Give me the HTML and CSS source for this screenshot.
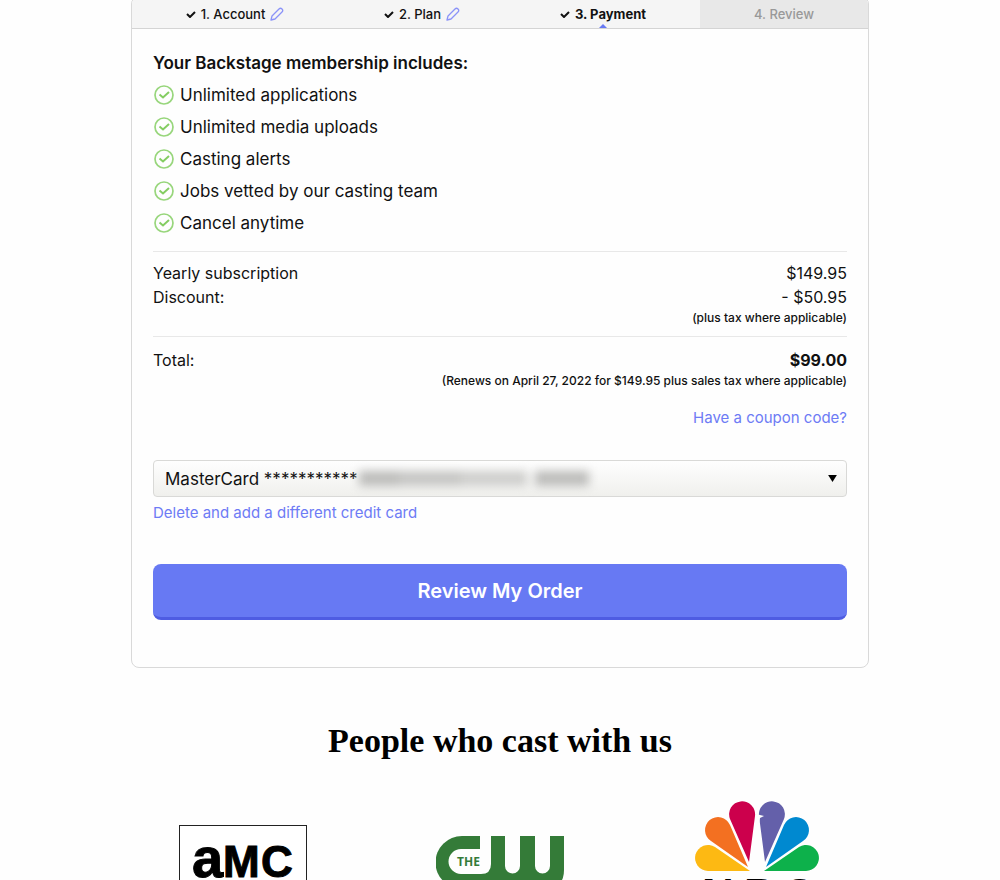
FILE: index.html
```html
<!DOCTYPE html>
<html lang="en">
<head>
    <meta charset="UTF-8">
    <meta name="viewport" content="width=device-width, initial-scale=1.0">
    <title>Backstage - Payment</title>
    <link rel="stylesheet" href="styles.css">
</head>
<body>
    <svg class="sprite" aria-hidden="true">
        <symbol id="tick" viewBox="0 0 10 8"><path d="M1 4l3 3 5-5" fill="none" stroke="#111" stroke-width="2"/></symbol>
        <symbol id="pencil" viewBox="0 0 14 14"><path d="M1 13l1-4 7-7q1.500-1.500 3 0t0 3L5 12z" fill="none" stroke="#8b93f8" stroke-width="1.300" stroke-linejoin="round"/></symbol>
        <symbol id="check" viewBox="0 0 20 20"><circle cx="10" cy="10" r="9" fill="none" stroke="#98d67c" stroke-width="1.700"/><path d="M5.500 9.500l3.500 3 6-5.500" fill="none" stroke="#84cd62" stroke-width="2"/></symbol>
    </svg>

    <main class="card">
        <nav class="steps">
            <a class="step" href="#account"><svg class="tick"><use href="#tick"/></svg>1. Account<svg class="pencil"><use href="#pencil"/></svg></a>
            <a class="step" href="#plan"><svg class="tick"><use href="#tick"/></svg>2. Plan<svg class="pencil"><use href="#pencil"/></svg></a>
            <a class="step active" href="#payment"><svg class="tick"><use href="#tick"/></svg>3. Payment</a>
            <span class="step disabled">4. Review</span>
        </nav>

        <form class="content">
            <h2>Your Backstage membership includes:</h2>
            <ul class="benefits">
                <li><svg class="check"><use href="#check"/></svg>Unlimited applications</li>
                <li><svg class="check"><use href="#check"/></svg>Unlimited media uploads</li>
                <li><svg class="check"><use href="#check"/></svg>Casting alerts</li>
                <li><svg class="check"><use href="#check"/></svg>Jobs vetted by our casting team</li>
                <li><svg class="check"><use href="#check"/></svg>Cancel anytime</li>
            </ul>

            <div class="prices">
                <div class="row"><span>Yearly subscription</span><span>$149.95</span></div>
                <div class="row"><span>Discount:</span><span>- $50.95</span></div>
                <p class="note">(plus tax where applicable)</p>
            </div>
            <div class="prices total">
                <div class="row"><span>Total:</span><strong>$99.00</strong></div>
                <p class="note">(Renews on April 27, 2022 for $149.95 plus sales tax where applicable)</p>
            </div>
            <a class="link coupon" href="#coupon">Have a coupon code?</a>

            <div class="card-select">
                <select name="credit-card" aria-label="Credit card">
                    <option>MasterCard ***********</option>
                </select>
                <!-- hidden card details -->
                <div class="redacted"><i></i><i></i><i></i><i></i></div>
                <svg class="arrow" viewBox="0 0 10 8"><path d="M0 0h10L5 8z"/></svg>
            </div>
            <a class="link" href="#delete-card">Delete and add a different credit card</a>

            <button type="submit" class="review">Review My Order</button>
        </form>
    </main>

    <section class="partners">
        <h1>People who cast with us</h1>
        <div class="logos">
            <svg class="logo" viewBox="0 0 128 128" role="img" aria-label="AMC">
                <rect x="0.500" y="25.500" width="127" height="77" fill="#fff" stroke="#222"/>
                <text class="amc" x="13" y="77"><tspan class="amc-a">a</tspan><tspan x="44">M</tspan><tspan x="82">C</tspan></text>
            </svg>
            <svg class="logo" viewBox="0 0 128 128" role="img" aria-label="The CW">
                <path d="M26 36H128V70Q128 89 109 89H26A26 26 0 0 1 26 36Z" fill="#347b38"/>
                <path d="M44 35H55V64Q55 74 45 74H25A12 12 0 0 1 25 49H44ZM69 35H84V66A7 7 0 0 1 69 66ZM99 35H114V66A7 7 0 0 1 99 66Z" fill="#fefefe"/>
                <text class="cw-the" x="21" y="66">THE</text>
            </svg>
            <svg class="logo" viewBox="0 0 128 128" role="img" aria-label="NBC">
                <path d="M57 71H15A13 13 0 1 1 22 47Z" fill="#fdb913"/>
                <path d="M55 67L18 41A13 13 0 1 1 37 25Z" fill="#f37021"/>
                <path d="M56 62L37 19A13 13 0 1 1 62 16Z" fill="#cc004c"/>
                <path d="M72 62L91 19A13 13 0 1 0 66 16Z" fill="#6460aa"/>
                <path d="M73 67L110 41A13 13 0 1 0 91 25Z" fill="#0089d0"/>
                <path d="M71 71H113A13 13 0 1 0 106 47Z" fill="#0db14b"/>
                <path d="M63 14L71 16 67 18 66 24 63 24Z" fill="#fefefe"/>
                <text class="nbc" x="9" y="110"><tspan>N</tspan><tspan x="51">B</tspan><tspan x="90">C</tspan></text>
            </svg>
        </div>
    </section>
</body>
</html>
```
FILE: styles.css
```css
* {
    box-sizing: border-box;
}
body {
    margin: 0;
    padding: 0 16px;
    background-color: #fefefe;
    color: #111;
    font-family: Inter, 'Liberation Sans', sans-serif;
    font-size: 17px;
    line-height: 24px;
}
.sprite {
    display: none;
}
.card {
    max-width: 738px;
    margin: -4px auto 0;
    border: 1px solid #d9d9d9;
    border-radius: 8px;
    overflow: hidden;
}
.steps {
    display: grid;
    grid-template-columns: 206fr 168fr 194fr 168fr;
    border-bottom: 1px solid #d4d4d4;
    background-color: #f5f5f5;
}
.step {
    display: flex;
    justify-content: center;
    align-items: center;
    position: relative;
    padding: 5px 0 2px;
    color: #111;
    font-size: 13px;
    font-weight: 500;
    text-decoration: none;
}
.step.active {
    font-weight: bold;
}
.step.active::after {
    content: "";
    position: absolute;
    bottom: 0;
    border: 4px solid transparent;
    border-top: 0;
    border-bottom-color: #6779f3;
}
.step.disabled {
    background-color: #e8e8e8;
    color: #999;
}
.tick {
    width: 10px;
    height: 8px;
    margin-right: 5px;
}
.pencil {
    width: 14px;
    height: 14px;
    margin-left: 5px;
}
.content {
    padding: 22px 21px 47px;
}
h2 {
    margin: 0 0 4px;
    font-size: 17px;
    font-weight: 600;
}
.benefits {
    margin: 0 0 12px;
    padding: 0;
    list-style: none;
}
.benefits li {
    display: flex;
    align-items: center;
    gap: 6px;
    height: 32px;
    padding-left: 1px;
}
.check {
    width: 20px;
    height: 20px;
}
.prices {
    padding: 9px 0;
    border-top: 1px solid #e8e8e8;
    font-size: 16px;
}
.total {
    padding-top: 11px;
}
.row {
    display: flex;
    justify-content: space-between;
}
.note {
    margin: 0;
    font-size: 12px;
    font-weight: 500;
    line-height: 18px;
    text-align: right;
}
.link {
    display: block;
    color: #6d7bf5;
    font-size: 15px;
    text-decoration: none;
}
.coupon {
    margin: 7px 0 30px;
    text-align: right;
}
.card-select {
    position: relative;
    margin-bottom: 4px;
}
.card-select select {
    display: block;
    width: 100%;
    height: 37px;
    padding: 0 11px;
    border: 1px solid #d9d9d7;
    border-radius: 4px;
    background: linear-gradient(#fefefe, #f0f0ed);
    color: #111;
    font: inherit;
    appearance: none;
}
.redacted {
    display: flex;
    position: absolute;
    top: 11px;
    left: 206px;
    filter: blur(5px);
    pointer-events: none;
}
.redacted i {
    width: 40px;
    height: 15px;
    background-color: #bdbdbb;
}
.redacted i:nth-child(2) {
    width: 62px;
    background-color: #c6c6c4;
}
.redacted i:nth-child(3) {
    width: 66px;
    background-color: #cfcfcd;
}
.redacted i:nth-child(4) {
    width: 54px;
    margin-left: 8px;
}
.arrow {
    position: absolute;
    top: 15px;
    right: 10px;
    width: 9px;
    height: 7px;
    pointer-events: none;
}
.review {
    width: 100%;
    height: 56px;
    margin-top: 39px;
    border: 0;
    border-bottom: 3px solid #4e5ce2;
    border-radius: 8px;
    background-color: #6779f3;
    color: #fff;
    font-family: inherit;
    font-size: 20px;
    font-weight: 600;
}
.partners {
    max-width: 771px;
    margin: 52px auto 0;
}
h1 {
    margin: 0 0 38px;
    color: #000;
    font-family: 'Liberation Serif', serif;
    font-size: 34px;
    line-height: 42px;
    text-align: center;
}
.logos {
    display: grid;
    grid-template-columns: repeat(3, 1fr);
    justify-items: center;
}
.logo {
    width: 128px;
    height: 128px;
}
.amc, .nbc {
    font-family: 'Liberation Sans', sans-serif;
    font-size: 44px;
    font-weight: bold;
}
.amc {
    stroke: #000;
    stroke-width: 1px;
}
.amc-a {
    font-size: 56px;
}
.cw-the {
    fill: #347b38;
    font-family: 'Open Sans', sans-serif;
    font-size: 12px;
    font-weight: bold;
}
```
